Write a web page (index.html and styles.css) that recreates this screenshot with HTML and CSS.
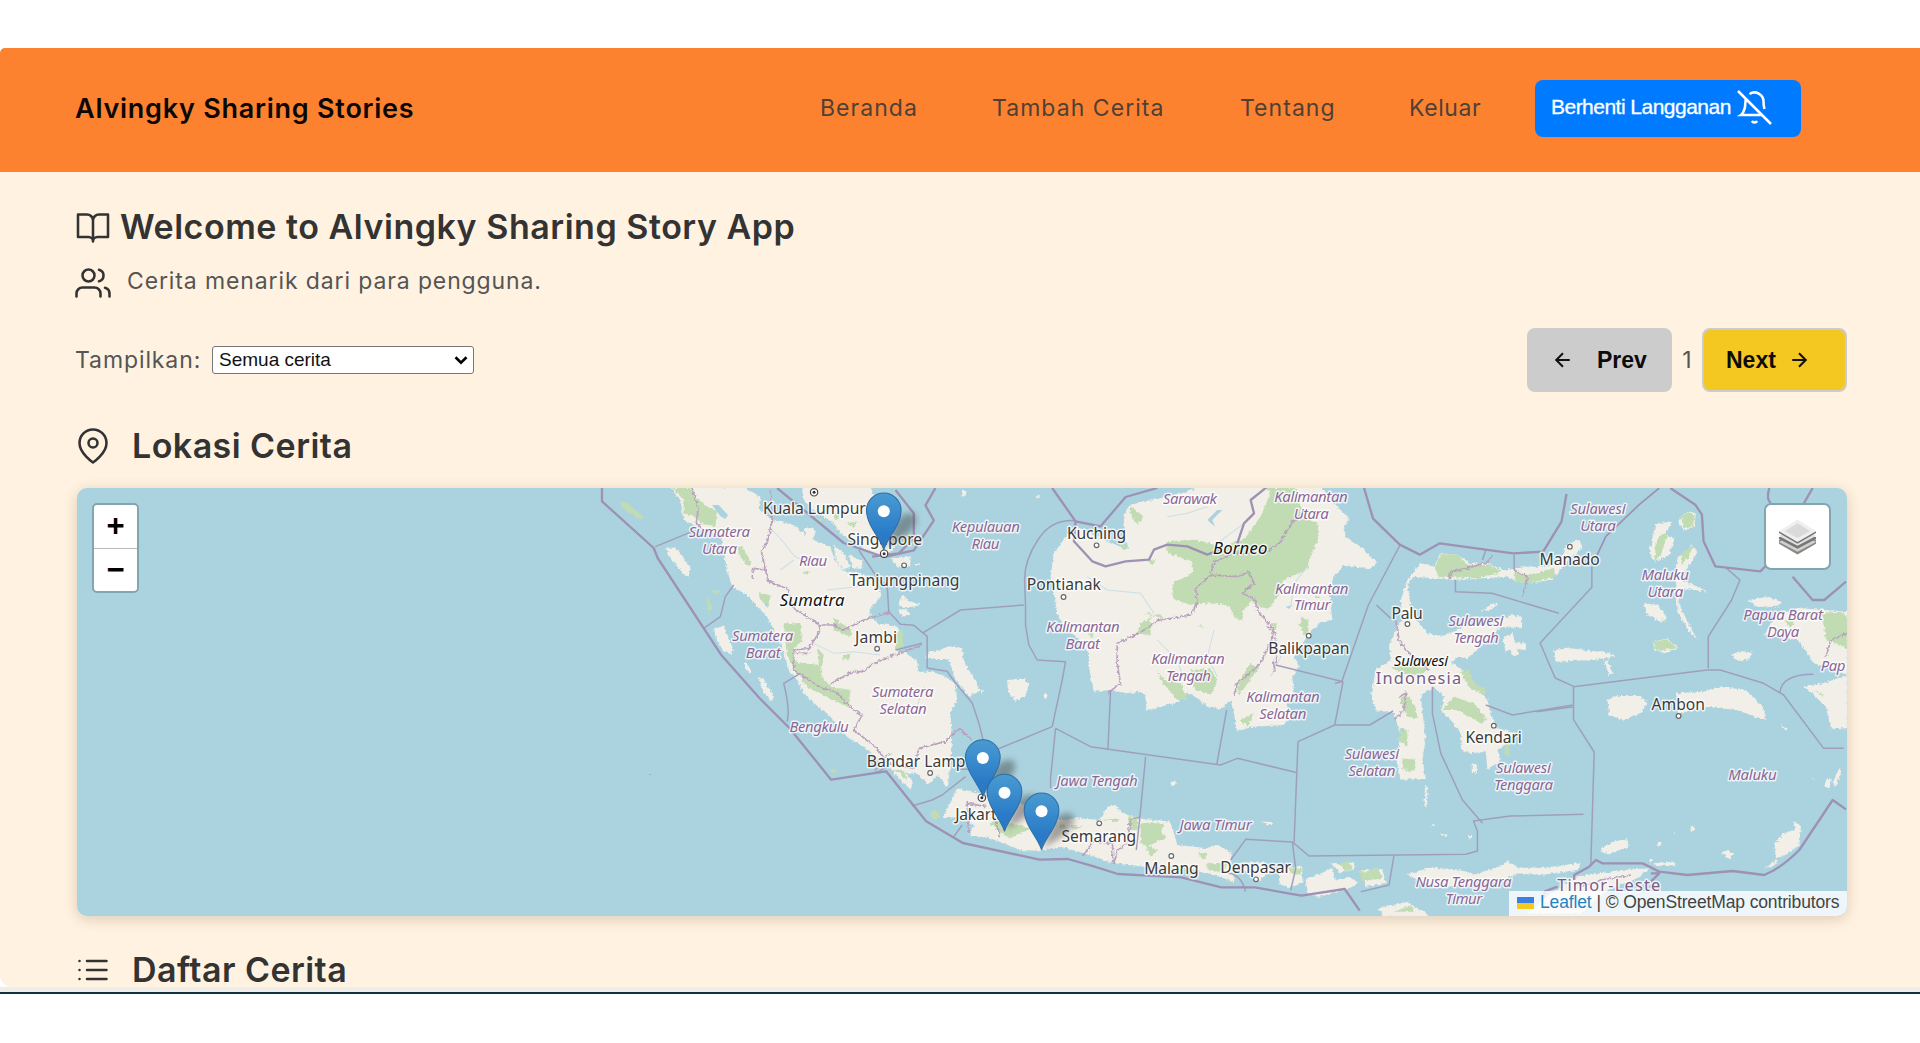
FILE: index.html
```html
<!DOCTYPE html>
<html lang="id">
<head>
<meta charset="utf-8">
<title>Alvingky Sharing Stories</title>
<link rel="stylesheet" href="styles.css">
</head>
<body>
<div class="window">
<header class="header">
  <a class="brand">Alvingky Sharing Stories</a>
  <nav class="nav">
    <a class="nav-home">Beranda</a>
    <a class="nav-add">Tambah Cerita</a>
    <a class="nav-about">Tentang</a>
    <a class="nav-exit">Keluar</a>
    <button class="subscribe"><span>Berhenti Langganan</span>
      <svg class="bell" viewBox="1 1 22 22"><path d="M13.73 21a2 2 0 0 1-3.46 0M18.63 13A17.89 17.89 0 0 1 18 8M6.26 6.26A5.86 5.86 0 0 0 6 8c0 7-3 9-3 9h14M18 8a6 6 0 0 0-9.33-5M1 1l22 22"/></svg>
    </button>
  </nav>
</header>
<main class="main">
  <h1 class="welcome"><svg class="line-icon" viewBox="0 0 24 24"><path d="M2 3h6a4 4 0 0 1 4 4v14a3 3 0 0 0-3-3H2zM22 3h-6a4 4 0 0 0-4 4v14a3 3 0 0 1 3-3h7z"/></svg><span>Welcome to Alvingky Sharing Story App</span></h1>
  <p class="intro"><svg class="line-icon" viewBox="0 0 24 24"><path d="M17 21v-2a4 4 0 0 0-4-4H5a4 4 0 0 0-4 4v2M23 21v-2a4 4 0 0 0-3-3.87M16 3.13a4 4 0 0 1 0 7.75"/><circle cx="9" cy="7" r="4"/></svg><span>Cerita menarik dari para pengguna.</span></p>
  <div class="toolbar">
    <label class="filter"><span>Tampilkan:</span>
      <span class="select">Semua cerita<svg viewBox="0 0 14 10"><path d="M2 2l5 5 5-5"/></svg></span></label>
    <div class="pager">
      <button class="page-button prev"><svg viewBox="0 0 24 24"><path d="M21 12H4M12 3l-9 9 9 9"/></svg><span>Prev</span></button>
      <span class="page-number">1</span>
      <button class="page-button next"><span>Next</span><svg viewBox="0 0 24 24"><path d="M3 12h17M12 3l9 9-9 9"/></svg></button>
    </div>
  </div>
  <h2 class="section-title"><svg class="line-icon" viewBox="0 0 24 24"><path d="M21 10c0 7-9 13-9 13s-9-6-9-13a9 9 0 0 1 18 0z"/><circle cx="12" cy="10" r="3"/></svg><span>Lokasi Cerita</span></h2>
  <section class="map">
    <svg class="map-canvas" viewBox="-1509 24 5307 1284" preserveAspectRatio="none">
      <defs>
        <filter id="coast" x="-2%" y="-5%" width="104%" height="110%"><feTurbulence type="fractalNoise" baseFrequency="0.11" numOctaves="3" seed="4"/><feDisplacementMap in="SourceGraphic" scale="13" xChannelSelector="R" yChannelSelector="G"/></filter>
        <filter id="soft" x="-50%" y="-50%" width="200%" height="200%"><feGaussianBlur stdDeviation="10"/></filter>
        <linearGradient id="pinFill" x1="0" y1="0" x2="0" y2="1"><stop offset="0" stop-color="#4a9bd1"/><stop offset=".7" stop-color="#2a7cc8"/><stop offset="1" stop-color="#2a77c4"/></linearGradient>
        <g id="pin"><path filter="url(#soft)" fill="#333" opacity=".42" d="M5-5L35-85Q62-118 90-108Q110-90 75-50Z"/><path d="M0 0C-8-32-52-75-52-119a52 52 0 0 1 104 0C52-75 8-32 0 0z" fill="url(#pinFill)" stroke="#2e6da4" stroke-width="3"/><circle cy="-116" r="18" fill="#fff"/></g>
        <g id="town"><circle r="7" fill="#fff" stroke="#666" stroke-width="3.5"/></g>
        <g id="capital"><circle r="11" fill="#fff" stroke="#444" stroke-width="3.5"/><circle r="4.5" fill="#333"/></g>
      </defs>
      <g class="land" filter="url(#coast)">
        <path d="M268 20L300 60 310 120 350 140 420 165 430 220 440 270 455 320 500 345 530 380 560 410 580 450 600 490 615 530 625 570 650 600 670 640 700 670 745 705 800 770 850 800 880 825 930 865 960 900 990 928 998 905 975 878 1010 882 1045 912 1070 885 1102 922 1108 870 1115 780 1110 700 1130 660 1125 610 1085 585 1050 575 1015 575 1010 545 975 515 950 515 965 470 950 440 890 430 870 410 870 385 905 345 880 300 850 283 790 272 760 235 750 200 680 172 650 140 600 122 580 125 535 85 540 50 490 20Z"/>
        <path d="M665 20L670 60 700 90 760 130 785 165 830 190 870 215 900 232 935 212 950 190 930 150 890 70 870 20Z"/>
        <path d="M672 145q25-10 35 10l-10 22-20-4zM760 195l30 25 20 40-20 8-25-30zM805 225l40 18 0 25-30-5zM930 235l60-5 0 25-35 8z"/>
        <path d="M255 200l30 5 45 55-5 30-15-5-45-60zM402 440l28 0 30 70-10 12-22-10-25-50zM495 545l20 30-8 5-15-20zM535 592l15 5 30 55-5 12-25-25z"/>
        <path d="M1080 510q25-18 65-5l5 40 30 50 20 35-35 20-40-50-20-60-70-5 10-20zM1280 600l50-5 15 15-10 35-30 18-22-25zM965 345l15 15 40 15-45 10-20-10zM955 388l25 0 8 12-20 12-12-10z"/>
        <path d="M1645 75L1740 55 1820 35 1850 20 2220 20 2250 55 2270 80 2305 115 2290 140 2295 170 2340 200 2390 250 2370 265 2320 260 2290 255 2260 290 2245 330 2255 420 2220 425 2185 460 2160 500 2140 530 2155 560 2135 590 2140 640 2115 660 2130 715 2105 735 2020 740 1968 752 1960 700 1950 660 1925 685 1880 680 1840 645 1810 640 1795 665 1740 680 1695 692 1695 645 1675 635 1635 640 1590 630 1540 635 1525 560 1525 520 1485 470 1445 430 1430 400 1420 340 1410 290 1420 220 1460 165 1490 140 1550 170 1590 190 1645 208 1630 165 1630 110Z"/>
        <path d="M2480 300L2520 250 2560 260 2580 220 2630 225 2670 250 2720 250 2770 270 2840 260 2900 260 2940 230 2960 190 2995 180 3005 205 2960 240 2930 280 2910 300 2850 310 2810 305 2780 290 2620 300 2560 295 2500 290 2480 310 2488 370 2500 410 2540 460 2580 470 2650 440 2740 430 2790 405 2825 410 2820 445 2760 440 2710 490 2660 535 2630 530 2610 545 2670 590 2680 620 2720 660 2730 700 2750 745 2805 760 2780 790 2750 810 2760 840 2720 870 2715 815 2670 820 2640 810 2640 760 2610 720 2580 690 2590 650 2560 620 2520 645 2525 700 2535 770 2525 840 2535 895 2460 900 2450 860 2458 760 2440 700 2385 690 2372 640 2385 570 2430 540 2425 500 2450 440 2465 420 2460 360Z"/>
        <path d="M1085 1015L1130 925 1200 940 1260 960 1320 970 1440 1020 1490 1015 1560 1020 1580 980 1605 975 1625 1000 1670 1015 1770 1025 1790 1095 1880 1105 1910 1095 1950 1115 1950 1150 1962 1206 1900 1185 1850 1170 1760 1160 1690 1160 1600 1150 1510 1120 1440 1100 1380 1112 1320 1110 1230 1075 1165 1065 1180 1035 1140 1010Z"/>
        <path d="M1970 1150l80-5 20 25-40 35-25-20zM2095 1165l70-5 0 45-40 20-30-15zM2175 1200l80-35 10 35 40-10 30 20-40 20-80 20-35-8zM2250 1150l70-2 0 20-40 10zM2340 1170l65 0 10 40-60 10zM2390 1285l90-20 70 45-140 0zM2475 1185l70-22 80 5 60 15 75-25 20-15 30 20 80 0 110-15-10 22-110 15-70-5-40 20-100 10-100 15zM2980 1190l80-10 60-10 90-5-50 35-80 30-80 70-160 0 60-50z"/>
        <path d="M3080 460l-15 0M3060 1105l35-20 40-7 10 20-60 25-20-5zM3215 1150l60-5 15 10-60 3zM3420 1118l18-8 18 10-10 18zM3580 1090l30-30 30-10 0-25 20 10-5 60-40 30-30 10zM3550 1165l40-25-5 15zM3730 915l10-25 10 10-5 30zM3755 910l20-45 5 8-15 50z"/>
        <path d="M3225 130l50-5-25 40 30 10-15 50-45 20-15-30zM3300 110l25-18 20 10-5 35-30 15-15-20zM3290 235l45-40 15 20-30 50-30 30 60 25 30 15-80-10-10 40 40 80 20 35-25-25-35-60-5-100z"/>
        <path d="M3190 370l40 5 30 40-20 10-40-20zM3218 485l40-10 35 30-40 15-35-10zM2920 510l50-5 120 15 15 10-70 10-110 5zM3070 545l10-5 15 40-10 5zM3080 660l25-12 70 0 25 20-20 30-55 22-40-15zM3285 640l80-5 50-15 80 10 50 50 10 40-90-30-80-10-90 20z"/>
        <path d="M3500 360l60-10 40 15-10 15-60 0zM3450 525l30-12 35 5-10 20-35 5zM3590 400l70-15 140 10 0 190-100-35-50-70-100-15zM3670 618l60-8 70-25 0 160-50 0-15-65zM2765 475l30-15 10 30 30 0 0 20-40-5-20 10zM2780 500l20-5 15 25-15 10zM2673 850l15 5 0 25-15-5z"/>
        <path d="M2533 910l8 20-2 50-8-10zM1770 905l15 0 0 10-12 2zM2035 1022l40 5-5 10zM1385 645l10-5 10 8-12 8zM1200 630l12 3-8 12zM3230 1088l12 0-4 10-10-2zM3205 1137l10 0 0 8-10 0zM3328 1040l14 0 0 12-14 0zM2550 1038l12-4 0 8zM2575 1060l25 4-4 8zM2665 1065l8 0 0 10-8 0zM1145 30l14 0-4 18-12 4zM1002 250l16 0 0 8-14 0zM1365 52l12-10 0 12zM3880 90l4 0M3275 1057l6 0 0 6zM3875 740l1 0M2700 395l30-22 25-4-30 22zM3600 735l20 8-4 10zM3690 895l10 0 0 6z"/>
      </g>
      <g class="forest" filter="url(#coast)">
        <path d="M118 65l25 5 50 45-12 4-55-35zM275 24l55 0 20 30 20 20 40 20-5 45-45-10-20-20-30-10 0-40zM470 200l15 0 28 50-8 10-25-30zM535 340l35 5-5 35-25-20zM395 330l30 5-25 8zM380 345l15 40-10 15-5-40zM610 430l50 0 5 55-25 20 5 40 70 10-5-50 20 20-10 60 30 35 60 10-5 50-50-20-75-40-60-90zM760 415l55 35-5 20-50-20zM940 460l25-10 5 55-25 5zM785 525l25-5-5 20-20-5zM775 655l35 5-10 18z"/>
        <path d="M2055 24l90 0 20 80 45 25 5 45-30 65-5 30-70 30-10 40-40 50-50-25-25 30 0 30-20-10-20-35-40-10-80 5-50-20 5-50 30-10 30-20-10-30-70-25 0-35 80-5 80 20 70-20 50-70 30-70z"/>
        <path d="M1690 400l20 0 0 65-40-5 10-30 55-30 15 15zM1650 80l40 30-20 25-20-30zM1620 190l20 10-10 12zM1730 570l20 30 50 10 20 50-30 0-30-35-20-25zM1830 570l60-5 20 40-20 40-50-20zM2160 410l25 10-5 50-15-10zM1980 720l40-20-20 40zM2005 550l30 15-60 80-5-20zM2070 430l20 0-5 20zM1520 460l20 0-5 15zM760 100l16 0 0 16-14 0zM705 110l20 8-6 12zM800 130l30-6-10 20zM665 275l24 0-8 14zM1700 242l24-4-8 18zM2200 345l18 4-8 8zM1855 435l16 4-6 6zM2155 432l14 0-6 12z"/>
        <path d="M2562 260l20-38 50 3 30 30 60 0 40 15-10 10-60 15-120-5zM2800 275l40 10 80-20 5 25-75 20-45-5zM2430 560l60-10 50 15-20 25-60-10zM2460 650l25 0 20 35 5 30-30-5-20-40zM2585 690l35-40 60 20 40 50-20 10-70-40zM2460 745l20 5 0 50-25-20zM2465 835l40 5-5 35-35-5zM2640 575l25-5 20 45 30 10 0 20-50-20zM2772 780l12 0 0 50-12-10z"/>
        <path d="M3235 165l25-5-20 65-20 20 5-50zM3300 110l25-15 18 12-8 32-28 5zM3300 220l40-25-20 40-20 20zM3218 487l40-10 30 28-65 8zM3240 418l20 3-10 10zM3720 400l60-5 20 20 0 90-65-25-5-35zM3610 420l30 5-10 20zM940 870l30 0 10 35-20-25zM745 868l22 2-8 12zM3700 630l30 15-5 5z"/>
        <path d="M1045 1000l20-10 15 20-20 10zM1230 1030l20-15 60 20 40 10-60 30-30-15zM1640 1010l30 0 0 40-20 0zM1680 1030l70 0-10 30 20 10-60 30-20-10zM1560 1020l60-5-10 10zM1690 1090l40 20-20 20zM1850 1120l30 0-10 20zM1880 1150l60 0-10 30-50-10zM1940 1195l20 10-18 2zM2125 1165l40 0-10 20-25-5zM2270 1150l35-5 10 20-20 10zM2335 1170l20 5 35-15 15 35-60 10zM2440 1295l50-20 10 20zM1470 1035l40 5-30 10zM1440 1030l20 15-20 0z"/>
      </g>
      <g class="lakes"><path d="M395 75l20 0 28 30-8 12-15-8zM2460 745l10 0 0 12-10 0zM1880 120l30-30 15 0-30 30 8 20zM550 370l12 0 0 15zM2115 380l20-5-10 12z"/></g>
      <g class="rivers"><path d="M575 150q40 40 60 70t90 20M740 330l90-10 40-20M700 490l60 30 60-5 80 10M640 240l-40 30M1520 290l60 40 100 10 40 60M1760 110l60-10 60-20M1990 130l-80 60M2180 260l-40 50-10 70M1730 480l60 60 20 60M1900 450l-20 80 30 60M2080 470l20 60-30 60M1030 620l-20 60-60 20"/></g>
      <g class="province" filter="url(#coast)">
        <path d="M335 24l18 60-5 45 30 30M570 30l5 90-12 60-20 35 12 55-35-5-5 30M555 270l10 35 55 20 20 60 80 50-5 25-30 45-45 5 0 60 85 55 40 10 55 55 25 15-25 45 70 55 30 45 80 15 15-60 80-20 40-40 40 35M720 435l40 0 30 15 60-30 75-22M745 615l70-40 35 0 20-20 70-30 85-30M690 520l-45 0M210 885l-5 0M885 875l5-30 40-25"/>
        <path d="M1890 285l10-40 60-25M1890 285l80 5 35-15 15 35-35 30 40 20 5 30 50 60-10 35-30 65-70 60-10 35M1890 285l-45 40 5 40-20 40-95 15-60 40-65 30 0 60 10 60-40 30M1960 220l100-5 40-30 35-60 30-20M2060 440l25 20 0 90M2078 545l5 30M2445 420l10 60 20 30 70 60M2455 650l20-10-5 50-30 30M2605 300l5-25 50-10 60-20 15-20M2825 350l15-60-40-20M3735 530l15-50 48-20"/>
        <path d="M1165 1060l-5-90 60 10M1240 1010l20 60M1506 1130l30-45 60 5 0 60M1600 1150l10-40 30-20 10-70 30-10M3000 1220l60-20 90-15"/>
      </g>
      <g class="sea-border">
        <path d="M225 200l110-45M370 445l50-35 15-60 25-35M620 725q10-35-10-115l50-30M835 210l60 90 25 15 5 80 35 38 40 3 40 33 0 95 60 10 25 35 50 60 20 60 20 80 10 60-100-2M1025 460l115-70 190-15M1025 490l-80 20M1335 375l-3-75q0-60 40-120 40-65 115-58M1335 375l0 60 10 60 25 45 85 5-10 55-30 140-170 70M1425 745l-15 150 0 30M1425 745l105 55 390 55 50-20 180 43M1590 630l-8 180M1695 830l-18 190-10 90M1938 690l-30 165M2085 555l202 50M2263 610l20-5 80-230 95-180M2287 605l-25 130-110 50-12 305 45 38 470-5 35-10 0-60-12-30 110-15 220-5M2262 735l105 0 70-42M2387 375l43 40M2715 210l-10 30M2624 300l0 35 110 5 200 60M2800 225l0 45M3033 260l0 62-155 167 45 105 55 25 0 100 62 97-10 335M2978 620l400-50 40 0 130 40 60 35 120 160 60 0M3382 565l0-95 70-110 25-60-40-35M2555 620l0 80 25 120 65 140 60 70M2715 675l80 30 180-30M2978 680l-110 15M1950 1140l45-62 140 8 10 80-15 65M1940 1180q40 0 55 55M2340 1235l85-20 15-90M1120 1070l25-35M885 880l35-20M1155 890l-70 55-30 15-60 18M3597 638q5-55 100-55"/>
      </g>
      <g class="nation-border">
        <path d="M65 24l0 40 155 140 12 30 190 290 115 130 90 90 125 155 165-25 120 150 110 65 230 50 85-2 70 20 80 25 90 5 100 5 120 30 100 0 140 25 130-20 45 65"/>
        <path d="M590 24l200 165 120 42 90-20 60-90-25-45 30-52M945 30l55 70 0 75-45 45-80 10"/>
        <path d="M1415 24l70 100-5 60 55 60 40 15 60-15 70-5 15-30 40-15 60 5 60 25 45-18M1970 190l20-60 30-30-10-40 50-40M1485 124l75 15 75-88 95-27M2350 24l27 92 80 78 60 30 60-34 220 30 90-5 55-90 15-83"/>
        <path d="M3268 24l75 50 20 30 5 80 35 75 135 15 40-40M3565 24q-10 35 5 45M3695 24l-40 70M3635 290l60 70 35 0 65-55"/>
        <path class="thin" d="M3235 24l-60 50-100 95-28 60"/>
        <path d="M2980 1200l0-15 45-25 20-20 20 10 120 0 50 25 85 10 135-12 95 12q50-20 105-75l100-150 40 28M3210 1180l25 0-25 25M2890 1235l40-15M2890 1235l0 20"/>
      </g>
      <use href="#capital" x="701" y="37"/><use href="#capital" x="911" y="221"/><use href="#capital" x="1204" y="953"/>
      <use href="#town" x="971" y="256"/><use href="#town" x="890" y="506"/><use href="#town" x="1548" y="196"/><use href="#town" x="1449" y="351"/><use href="#town" x="2184" y="467"/><use href="#town" x="2480" y="432"/><use href="#town" x="2967" y="200"/><use href="#town" x="1049" y="879"/><use href="#town" x="1556" y="1030"/><use href="#town" x="1772" y="1128"/><use href="#town" x="2026" y="1198"/><use href="#town" x="2739" y="737"/><use href="#town" x="3293" y="708"/>
      <g class="city">
        <text x="548" y="101" textLength="308">Kuala Lumpur</text><text x="801" y="195" textLength="224">Singapore</text><text x="807" y="319" textLength="330">Tanjungpinang</text><text x="824" y="488" textLength="126">Jambi</text><text x="1459" y="176" textLength="178">Kuching</text><text x="1339" y="331" textLength="222">Pontianak</text><text x="2063" y="521" textLength="243">Balikpapan</text><text x="2432" y="416" textLength="94">Palu</text><text x="2876" y="255" textLength="181">Manado</text><text x="859" y="862" textLength="296">Bandar Lamp</text><text x="1124" y="1020" textLength="150">Jakarta</text><text x="1443" y="1085" textLength="224">Semarang</text><text x="1691" y="1183" textLength="163">Malang</text><text x="1919" y="1179" textLength="212">Denpasar</text><text x="2654" y="790" textLength="169">Kendari</text><text x="3212" y="690" textLength="160">Ambon</text>
      </g>
      <g class="island">
        <text x="598" y="379" textLength="194">Sumatra</text><text x="1897" y="223" textLength="163">Borneo</text><text class="small" x="2440" y="557" textLength="162">Sulawesi</text>
      </g>
      <g class="region">
        <text x="325" y="172" textLength="184">Sumatera</text><text x="365" y="222" textLength="105">Utara</text><text x="656" y="259" textLength="84">Riau</text><text x="455" y="484" textLength="184">Sumatera</text><text x="496" y="535" textLength="105">Barat</text><text x="875" y="652" textLength="184">Sumatera</text><text x="897" y="703" textLength="142">Selatan</text><text x="627" y="755" textLength="178">Bengkulu</text><text x="1114" y="156" textLength="204">Kepulauan</text><text x="1173" y="207" textLength="84">Riau</text>
        <text x="1747" y="71" textLength="162">Sarawak</text><text x="2081" y="67" textLength="220">Kalimantan</text><text x="2139" y="118" textLength="105">Utara</text><text x="1397" y="455" textLength="220">Kalimantan</text><text x="1455" y="506" textLength="103">Barat</text><text x="2083" y="341" textLength="220">Kalimantan</text><text x="2139" y="391" textLength="110">Timur</text><text x="1712" y="552" textLength="220">Kalimantan</text><text x="1756" y="603" textLength="135">Tengah</text><text x="1997" y="666" textLength="220">Kalimantan</text><text x="2036" y="717" textLength="141">Selatan</text>
        <text x="2968" y="102" textLength="166">Sulawesi</text><text x="2998" y="152" textLength="107">Utara</text><text x="2603" y="439" textLength="165">Sulawesi</text><text x="2618" y="490" textLength="136">Tengah</text><text x="3182" y="301" textLength="142">Maluku</text><text x="3200" y="352" textLength="107">Utara</text><text x="3487" y="421" textLength="239">Papua Barat</text><text x="3558" y="472" textLength="97">Daya</text><text x="3719" y="574" textLength="74">Pap</text>
        <text x="1428" y="918" textLength="243">Jawa Tengah</text><text x="1797" y="1049" textLength="216">Jawa Timur</text><text x="2292" y="837" textLength="163">Sulawesi</text><text x="2303" y="887" textLength="141">Selatan</text><text x="2746" y="880" textLength="164">Sulawesi</text><text x="2740" y="931" textLength="177">Tenggara</text><text x="3442" y="900" textLength="145">Maluku</text><text x="2504" y="1222" textLength="288">Nusa Tenggara</text><text x="2594" y="1272" textLength="110">Timur</text>
      </g>
      <g class="country"><text x="2385" y="612" textLength="256">Indonesia</text><text x="2929" y="1233" textLength="309">Timor-Leste</text></g>
      <use href="#pin" x="910" y="210"/><use href="#pin" x="1207" y="950"/><use href="#pin" x="1272" y="1054"/><use href="#pin" x="1383" y="1110"/>
    </svg>
    <div class="zoom"><span>+</span><span>−</span></div>
    <div class="layers"><svg viewBox="0 0 40 38"><path fill="#888" d="M1 26l19 11 19-11v-4L20 10 1 22z"/><path fill="#d0d0cc" d="M1 24l19 10 19-10L20 13z"/><path fill="#777" d="M1 19v2l19 10 19-10v-2z"/><path fill="#e2e2df" d="M1 18l19 10 19-10L20 8z"/><path fill="#777" d="M1 13v2l19 11 19-11v-2z"/><path fill="#efefef" d="M1 13L20 1l19 12-19 11z"/><path fill="#dadada" d="M7 13l13-8 13 8-13 7z"/></svg></div>
    <div class="attribution"><svg viewBox="0 0 12 8" preserveAspectRatio="none"><path fill="#3b7fe0" d="M0 0h12v4H0z"/><path fill="#f5c91d" d="M0 4h12v4H0z"/></svg><a>Leaflet</a><span>| © OpenStreetMap contributors</span></div>
  </section>
  <h2 class="section-title list-title"><svg class="line-icon" viewBox="0 0 24 24"><path d="M8 6h13M8 12h13M8 18h13M3 6h.01M3 12h.01M3 18h.01"/></svg><span>Daftar Cerita</span></h2>
</main>
</div>
<div class="window-edge"></div>
</body>
</html>
```
FILE: styles.css
```css
* { box-sizing: border-box; }
body { margin: 0; padding-top: 48px; height: 1043px; overflow: hidden; background: #fff; font-family: Inter, "Open Sans", sans-serif; color: #333; }
h1, h2, p { margin: 0; }
button { border: 0; padding: 0; font-family: "Liberation Sans", Arial, sans-serif; }
.window { height: 939px; overflow: hidden; background: #fff2e0; border-radius: 5px 0 0 12px; }
.window-edge { height: 7px; border-bottom: 2px solid #12303d; background: #eeedea; }
.header { display: flex; justify-content: space-between; align-items: center; height: 124px; padding: 0 119px 4px 76px; background: #fd8230; }
.brand { font-size: 27px; font-weight: 600; letter-spacing: .75px; color: #0b0704; white-space: nowrap; margin-left: -1px; }
.nav { display: grid; grid-template-columns: 172px 248px 169px 126px 266px; align-items: center; font-size: 23px; letter-spacing: 1.05px; color: #4f4035; white-space: nowrap; }
.nav-exit { letter-spacing: .6px; }
.subscribe { display: flex; align-items: center; gap: 7px; height: 57px; padding: 0 0 2px 16px; border-radius: 8px; background: #007bff; color: #fff; font-size: 21px; }
.subscribe span { letter-spacing: -.52px; -webkit-text-stroke: .3px #fff; }
.bell { flex: none; width: 33px; height: 33px; overflow: visible; fill: none; stroke: #fff; stroke-width: 1.7; }
.main { padding: 0 73px 0 76px; }
.line-icon { flex: none; width: 36px; height: 36px; fill: none; stroke: #333; stroke-width: 1.7; stroke-linecap: round; stroke-linejoin: round; }
.welcome, .intro, .section-title { display: flex; align-items: center; white-space: nowrap; }
.welcome { height: 56px; margin-top: 26px; font-size: 34px; font-weight: 600; letter-spacing: .53px; }
.welcome .line-icon { margin: 4px 9px 0 -1px; }
.intro { height: 50px; margin-top: 2px; font-size: 23px; letter-spacing: .88px; color: #555; }
.intro .line-icon { margin: 3px 16px 0 -1px; }
.toolbar { display: flex; justify-content: space-between; align-items: center; height: 64px; margin-top: 22px; font-size: 23px; color: #555; }
.filter { display: flex; align-items: center; margin-left: -1px; letter-spacing: .9px; }
.filter > span:first-child { width: 137px; }
.select { display: flex; justify-content: space-between; align-items: center; width: 262px; height: 28px; padding: 0 4px 0 6px; border: 1.5px solid #777; border-radius: 3px; background: #fff; font: 19px "Liberation Sans", Arial, sans-serif; letter-spacing: 0; color: #111; }
.select svg { width: 16px; height: 11px; fill: none; stroke: #000; stroke-width: 2.4; }
.pager { display: flex; align-items: center; }
.page-button { display: flex; align-items: center; width: 145px; height: 64px; border: 2px solid #ccc; border-radius: 8px; background: #ccc; color: #0c0c0c; font-size: 23px; font-weight: 700; }
.page-button svg { width: 18px; height: 18px; fill: none; stroke: #111; stroke-width: 2.7; }
.prev { padding-left: 25px; gap: 25px; }
.next { padding-left: 22px; gap: 14px; background: #f4c721; }
.page-number { width: 30px; text-align: center; }
.section-title { height: 56px; margin-top: 25px; font-size: 34px; font-weight: 600; letter-spacing: .45px; }
.section-title .line-icon { margin: 2px 21px 0 -1px; }
.map { position: relative; height: 428px; margin: 15px 0 0 1px; overflow: hidden; border-radius: 10px; background: #abd3df; }
.map { box-shadow: 0 3px 14px rgba(80, 50, 20, .2); }
.map-canvas { display: block; width: 100%; height: 100%; font-family: "Noto Sans", sans-serif; }
.land { fill: #f2efe9; }
.forest { fill: #c1dcb2; }
.lakes { fill: #abd3df; }
.rivers { fill: none; stroke: #c9dfe3; stroke-width: 3; }
.province { fill: none; stroke: #b8a2bd; stroke-width: 5; stroke-linejoin: round; }
.sea-border { fill: none; stroke: #9f9fbd; stroke-width: 4.5; stroke-linejoin: round; }
.nation-border { fill: none; stroke: #9d91b4; stroke-width: 7; stroke-linejoin: round; }
.nation-border .thin { stroke-width: 5; }
.map text { paint-order: stroke; stroke: rgba(255, 255, 255, .75); stroke-width: 9; stroke-linejoin: round; }
.city { font-size: 47px; fill: #3b3b3b; }
.island { font-size: 50px; font-style: italic; fill: #111; }
.island .small { font-size: 44px; }
.region { font-size: 45px; font-style: italic; fill: #8b6796; }
.country { font-size: 49px; fill: #795a84; }
.zoom { position: absolute; top: 15px; left: 15px; width: 47px; height: 90px; border: 2px solid #82a5b2; border-radius: 5px; background: #fff; font: bold 31px "Liberation Sans", Arial, sans-serif; color: #000; text-align: center; }
.zoom span { display: block; height: 43px; line-height: 42px; }
.zoom span + span { border-top: 1px solid #bbb; }
.layers { position: absolute; top: 15px; right: 16px; display: grid; place-items: center; width: 67px; height: 67px; border: 2px solid #82a5b2; border-radius: 7px; background: #fff; }
.layers svg { width: 39px; height: 38px; }
.attribution { position: absolute; right: 0; bottom: 0; display: flex; align-items: center; width: 338px; height: 25px; padding: 0 0 2px 8px; background: rgba(255, 255, 255, .8); font: 17.5px "Liberation Sans", Arial, sans-serif; letter-spacing: -.14px; white-space: nowrap; color: #444; }
.attribution svg { flex: none; width: 17px; height: 12px; margin-right: 6px; }
.attribution a { margin-right: 5px; color: #2184c5; }
.list-title { margin-top: 25px; }
```
